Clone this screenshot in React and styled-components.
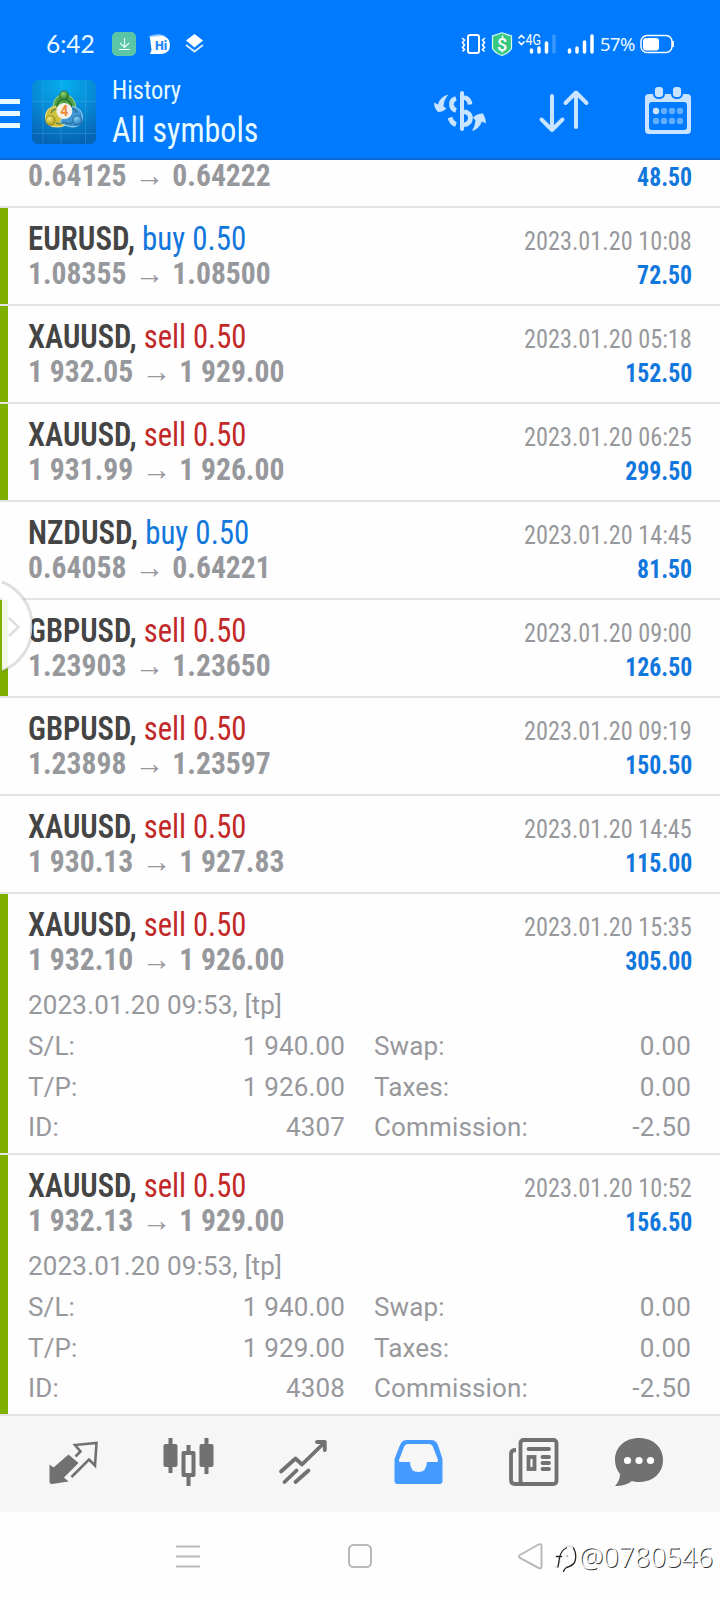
import React from "react";
import styled, { createGlobalStyle } from "styled-components";

const Global = createGlobalStyle`
  * { box-sizing: border-box; }
  body { margin: 0; background: #fff; font-family: Roboto, "Noto Sans CJK SC", sans-serif; }
`;

const Screen = styled.div`
  position: relative;
  width: 720px;
  height: 1600px;
  display: flex;
  flex-direction: column;
  overflow: hidden;
  background: #fefefe;
`;

const Header = styled.header`
  flex: none;
  height: 160px;
  background: #007aff;
  border-bottom: 2px solid #0a68d6;
  display: flex;
  flex-direction: column;
`;

const StatusBar = styled.div`
  height: 70px;
  padding: 18px 45px 0 46px;
  display: flex;
  align-items: center;
  color: #e9f8ff;
`;

const Clock = styled.span`
  width: 64px;
  font: 400 24.5px/30px Lato, sans-serif;
`;

const StatusIcons = styled.svg`
  display: block;
  margin-left: ${(p) => p.$gap || 0}px;
`;

const Spacer = styled.i`
  flex: 1;
`;

const Percent = styled.span`
  margin-left: 6px;
  width: 33px;
  white-space: nowrap;
  font: 400 18.5px/24px "Noto Sans", sans-serif;
  letter-spacing: -0.6px;
`;

const TitleBar = styled.div`
  height: 88px;
  display: flex;
  align-items: flex-start;
`;

const MenuButton = styled.div`
  width: 20px;
  margin: 29px 12px 0 0;
  display: flex;
  flex-direction: column;
  gap: 7px;
`;

const MenuLine = styled.i`
  height: 5px;
  background: #e6fbff;
`;

const LogoSvg = styled.svg`
  margin-top: 10px;
`;

const Titles = styled.div`
  flex: 1;
  padding-left: 16px;
  color: #e6fbff;
  font-family: Roboto, sans-serif;
  font-stretch: 75%;
`;

const Caption = styled.div`
  margin-top: 5px;
  font-size: 26px;
  line-height: 30px;
  font-weight: 450;
  transform: scaleX(0.94);
  transform-origin: left;
`;

const Heading = styled.div`
  margin-top: 6px;
  font-size: 34.5px;
  line-height: 38px;
  font-weight: 450;
  transform: scaleX(0.928);
  transform-origin: left;
`;

const List = styled.main`
  height: 1256px;
  overflow: hidden;
  display: flex;
  flex-direction: column;
  justify-content: flex-end;
`;

const Deal = styled.article`
  flex: none;
  height: ${(p) => (p.$open ? 261 : 98)}px;
  border-bottom: 2px solid #e4e4e4;
  display: flex;
`;

const Stripe = styled.i`
  width: 8px;
  background: ${(p) => (p.$on ? "#7fb000" : "transparent")};
`;

const DealBody = styled.div`
  flex: 1;
  padding: 14px 28px 0 20px;
`;

const Line = styled.div`
  display: flex;
  justify-content: space-between;
  align-items: baseline;
  height: 34px;
  line-height: 34px;
  white-space: pre;
  font-stretch: 75%;
`;

const Title = styled.span`
  font-size: 32.5px;
  transform: scaleX(${(p) => (p.$side === "buy" ? 0.952 : 0.94)});
  transform-origin: left;
`;

const Symbol = styled.span`
  font-weight: 620;
  color: #444;
`;

const Side = styled.span`
  font-weight: 400;
  color: ${(p) => (p.$side === "buy" ? "#1277dc" : "#c22828")};
`;

const Prices = styled.span`
  font-size: 32px;
  font-weight: 680;
  color: #97989c;
  transform: scaleX(0.925);
  transform-origin: left;
`;

const Arrow = styled.span`
  font-family: "Liberation Sans", sans-serif;
  font-weight: 400;
  font-size: 32px;
  line-height: 20px;
  margin: 0 1.5px;
`;

const When = styled.span`
  font-size: 26px;
  color: #97989c;
  transform: scaleX(0.933);
  transform-origin: right;
`;

const Profit = styled.span`
  font-size: 26px;
  font-weight: 700;
  color: #1277dc;
  transform: scaleX(0.915);
  transform-origin: right;
`;

const Comment = styled.div`
  margin-top: 10px;
  height: 41px;
  font-size: 26px;
  line-height: 38px;
  letter-spacing: 0.17px;
  color: #97989c;
`;

const Details = styled.dl`
  margin: 0;
  display: grid;
  grid-template-columns: 317px 317px;
  column-gap: 29px;
  grid-auto-rows: 40.6px;
`;

const Detail = styled.div`
  display: flex;
  justify-content: space-between;
  font-size: 26px;
  line-height: 38px;
  letter-spacing: 0.15px;
  color: #97989c;
`;

const TabBar = styled.nav`
  height: 96px;
  background: #f6f6f6;
  display: flex;
`;

const SystemBar = styled.footer`
  height: 88px;
  display: flex;
  align-items: center;
`;

const EdgeHandle = styled.svg`
  position: absolute;
  left: 0;
  top: 576px;
`;

const Watermark = styled.div`
  position: absolute;
  right: 7px;
  bottom: 27px;
  display: flex;
  align-items: center;
  color: #fff;
  font: 300 27.5px/32px "Noto Sans", sans-serif;
  text-shadow: 1px 1px 0.5px #333;
  white-space: nowrap;
`;

const deals = [
  ["AUDUSD", "buy", "0.64125", "0.64222", "", "48.50", 0],
  ["EURUSD", "buy", "1.08355", "1.08500", "2023.01.20 10:08", "72.50", 1],
  ["XAUUSD", "sell", "1 932.05", "1 929.00", "2023.01.20 05:18", "152.50", 1],
  ["XAUUSD", "sell", "1 931.99", "1 926.00", "2023.01.20 06:25", "299.50", 1],
  ["NZDUSD", "buy", "0.64058", "0.64221", "2023.01.20 14:45", "81.50", 0],
  ["GBPUSD", "sell", "1.23903", "1.23650", "2023.01.20 09:00", "126.50", 1],
  ["GBPUSD", "sell", "1.23898", "1.23597", "2023.01.20 09:19", "150.50", 0],
  ["XAUUSD", "sell", "1 930.13", "1 927.83", "2023.01.20 14:45", "115.00", 0],
  ["XAUUSD", "sell", "1 932.10", "1 926.00", "2023.01.20 15:35", "305.00", 1,
    { sl: "1 940.00", tp: "1 926.00", id: "4307" }],
  ["XAUUSD", "sell", "1 932.13", "1 929.00", "2023.01.20 10:52", "156.50", 1,
    { sl: "1 940.00", tp: "1 929.00", id: "4308" }],
];

function DealRow({ deal, headless }) {
  const [symbol, side, open, close, when, profit, marked, more] = deal;
  const details = more && [
    ["S/L:", more.sl], ["Swap:", "0.00"],
    ["T/P:", more.tp], ["Taxes:", "0.00"],
    ["ID:", more.id], ["Commission:", "-2.50"],
  ];
  return (
    <Deal $open={!!more}>
      <Stripe $on={marked} />
      <DealBody>
        <Line>
          {!headless && (
            <>
              <Title $side={side}><Symbol>{symbol}, </Symbol><Side $side={side}>{side} 0.50</Side></Title>
              <When>{when}</When>
            </>
          )}
        </Line>
        <Line>
          <Prices>{open} <Arrow>→</Arrow> {close}</Prices>
          <Profit>{profit}</Profit>
        </Line>
        {more && (
          <>
            <Comment>2023.01.20 09:53, [tp]</Comment>
            <Details>
              {details.map(([k, v]) => (
                <Detail key={k}><span>{k}</span><span>{v}</span></Detail>
              ))}
            </Details>
          </>
        )}
      </DealBody>
    </Deal>
  );
}

const AppLogo = () => (
  <LogoSvg width="64" height="64" viewBox="0 0 64 64">
    <defs>
      <radialGradient id="bg" cx="50%" cy="5%" r="95%">
        <stop offset="0" stopColor="#06b0ee" /><stop offset=".55" stopColor="#0788d4" /><stop offset="1" stopColor="#0664b4" />
      </radialGradient>
      <radialGradient id="gr" cx="40%" cy="30%" r="70%"><stop offset="0" stopColor="#8fd673" /><stop offset="1" stopColor="#257a2b" /></radialGradient>
      <radialGradient id="ye" cx="40%" cy="30%" r="70%"><stop offset="0" stopColor="#f4ea78" /><stop offset="1" stopColor="#a99a1c" /></radialGradient>
      <radialGradient id="bl" cx="40%" cy="30%" r="70%"><stop offset="0" stopColor="#7fd0f4" /><stop offset="1" stopColor="#1f72bb" /></radialGradient>
    </defs>
    <rect width="64" height="64" rx="6" fill="url(#bg)" />
    <path d="M11 0V64M29 0V64M53.500 0V64M0 21.500H64M0 53.500H64" stroke="#4bbcf0" strokeOpacity=".3" strokeWidth="1" />
    <path d="M21 29Q21 15 32 14.500Q43 15 44 29z" fill="#4ea247" stroke="#a4d489" strokeWidth="1" />
    <path d="M25 26Q13 27 13.500 38Q14 47 25 47Q33 47 36 42z" fill="#cfc13c" stroke="#efe58e" strokeWidth="1" />
    <path d="M39 26Q51 28 50.500 38Q50 47 40 47Q32 46 28 42z" fill="#3e96d6" stroke="#9ad2f2" strokeWidth="1" />
    <path d="M25 27q0-7 7-8q7 1 7.500 8" fill="none" stroke="#2a7330" strokeWidth="1.500" />
    <path d="M19 33q2-4 6-4M45 33q-2-4-5-4M24 43q5 2 8-1M40 43q-5 2-7-1" fill="none" stroke="#245f6c" strokeOpacity=".6" strokeWidth="1.500" />
    <circle cx="32" cy="15.500" r="4.500" fill="url(#gr)" stroke="#1f5c2b" strokeWidth=".6" />
    <circle cx="18.300" cy="40.500" r="4.800" fill="url(#ye)" stroke="#6f6a1a" strokeWidth=".6" />
    <circle cx="45.300" cy="40.500" r="4.800" fill="url(#bl)" stroke="#174f85" strokeWidth=".6" />
    <circle cx="32.300" cy="31" r="8" fill="#f3f0e6" />
    <text x="32.300" y="36" textAnchor="middle" fontFamily="Roboto" fontWeight="700" fontSize="14" fill="#ee8a35">4</text>
  </LogoSvg>
);

const Tools = () => (
  <svg width="300" height="88" viewBox="420 70 300 88">
    <g fill="none" stroke="#c8e4ff" strokeWidth="4">
      <path d="M462 93V129" strokeLinecap="round" />
      <path d="M456 98.500Q451 100 451.500 105Q452 109 456 110.500M456 124.500Q451.500 123 450 117.500M464 97.500Q469.500 98.500 470 104.500M464 111.500Q470.500 113 470.500 118Q470 124 464 125" strokeWidth="4.800" />
      <path d="M552 96V130M541.500 119.500L552 130L562.500 119.500M576 127V93M565.500 103L576 92.500L586.500 103" strokeLinecap="round" strokeLinejoin="round" />
    </g>
    <path d="M448.500 94.500Q439.500 97 438 104.500L434 102.500Q434 108 438 112Q443 112 446.500 108.500L443.500 106.500Q443.500 100 448.500 94.500z" fill="#c8e4ff" />
    <path d="M472 131Q475 126 475.500 120.500L473 117.500Q477 113.500 483 113.500Q486 118 486 123.500L482 121.500Q479 129 472 131z" fill="#c8e4ff" />
    <path d="M649 94H687a4 4 0 0 1 4 4V130a4 4 0 0 1-4 4H649a4 4 0 0 1-4-4V98a4 4 0 0 1 4-4zM652 102a3 3 0 0 0-3 3V127a3 3 0 0 0 3 3H684a3 3 0 0 0 3-3V105a3 3 0 0 0-3-3z" fill="#c8e4ff" fillRule="evenodd" />
    {[659, 677].map((x) => (
      <rect key={x} x={x - 5} y="86" width="10" height="12" rx="4" fill="#c8e4ff" stroke="#007aff" strokeWidth="2" />
    ))}
    {[656, 664, 672, 680].map((x, i) => (
      <g key={x} fill="#63aeff">
        <circle cx={x} cy="111" r="3.200" fill={i ? "#63aeff" : "#c8e4ff"} />
        <circle cx={x} cy="121" r="3.200" />
      </g>
    ))}
  </svg>
);

const LeftStatus = () => (
  <StatusIcons width="100" height="28" viewBox="110 30 100 28">
    <rect x="112" y="32" width="24" height="24" rx="5" fill="#5cc5a5" />
    <path d="M124.500 38V47M120 43l4.500 4.500l4.500-4.500M119 49.500H130" stroke="#e5fff6" strokeWidth="1.200" fill="none" />
    <path d="M149 36q12-4 17 1v6h-14z" fill="#fff" opacity=".6" />
    <path d="M150 37L162 36q8 1 8 9q0 8-8 9H150l1.500-4z" fill="#fff" />
    <text x="155" y="50" fontFamily="Roboto" fontWeight="900" fontSize="12.500" fill="#2a8af6">Hi</text>
    <path d="M194.500 34L203 40.500L194.500 47.500L186 40.500z" fill="#fff" />
    <path d="M186 45l8.500 6.500l8.500-6.500" stroke="#d5eaff" strokeWidth="2" fill="none" />
  </StatusIcons>
);

const RightStatus = () => (
  <StatusIcons width="134" height="28" viewBox="460 30 134 28">
    <rect x="468" y="35" width="11" height="18" rx="2" fill="none" stroke="#fff" strokeWidth="2" />
    <path d="M462 38l2.500 2l-2 2.500l2 2.500l-2 2.500l2 2l-2 2M485 38l-2.500 2l2 2.500l-2 2.500l2 2.500l-2 2l2 2" stroke="#fff" strokeWidth="1.600" fill="none" />
    <path d="M502 32.800L511.500 36V48.500Q509 53 502 55.500Q495 53 492.500 48.500V36z" fill="#38c881" stroke="#d6fff0" strokeWidth="1.200" />
    <text x="502" y="50.500" textAnchor="middle" fontFamily="Roboto" fontWeight="500" fontSize="18" fill="#fff">$</text>
    <path d="M518.500 38.500l3-3l3 3M518.500 41.500l3 3l3-3" stroke="#fff" strokeWidth="1.600" fill="none" />
    <text x="525.500" y="45" fontFamily="Roboto" fontSize="14" fontWeight="400" fill="#fff" textLength="15.500" lengthAdjust="spacingAndGlyphs">4G</text>
    <g stroke="#fff" strokeWidth="3.500" strokeLinecap="round">
      <path d="M531.500 50V52M539 48V52M546.500 43V52M569.500 50V52M577 48V52M584.500 42V52M592 36V52" />
      <path d="M554 36V52" stroke="#3b98ff" />
    </g>
  </StatusIcons>
);

const Battery = () => (
  <StatusIcons $gap={6} width="36" height="22" viewBox="639 33 36 22">
    <rect x="641" y="35.500" width="31" height="17" rx="6" fill="none" stroke="#fff" strokeWidth="1.500" />
    <rect x="643" y="38" width="16" height="12.500" rx="3" fill="#fff" />
    <path d="M673 41v6" stroke="#fff" strokeWidth="1.800" />
  </StatusIcons>
);

const TabIcons = () => (
  <svg width="720" height="96" viewBox="0 1416 720 96">
    <g fill="#717171">
      <path d="M49.500 1464.500L53.500 1467.500L68.500 1454.500L78.500 1463L64 1477.500L68.500 1481.500L52 1484Q49.500 1484 49.500 1482z" />
      <path d="M75.500 1456.500L80.500 1451.500L75 1445L96.500 1443L95 1465.500L89 1459.500L71.500 1477" fill="none" stroke="#717171" strokeWidth="2.600" />
      <path d="M168.500 1438h4v6h3a2 2 0 0 1 2 2v19a2 2 0 0 1-2 2h-3v6h-4v-6h-3a2 2 0 0 1-2-2v-19a2 2 0 0 1 2-2h3z" />
      <path d="M204.500 1438h4v6h3a2 2 0 0 1 2 2v19a2 2 0 0 1-2 2h-3v7h-4v-7h-3a2 2 0 0 1-2-2v-19a2 2 0 0 1 2-2h3z" />
      <path d="M186.500 1445h4v6h3a2 2 0 0 1 2 2v22a2 2 0 0 1-2 2h-3v9h-4v-9h-3a2 2 0 0 1-2-2v-22a2 2 0 0 1 2-2h3zM185.500 1455v18h6v-18z" fillRule="evenodd" />
    </g>
    <g fill="none" stroke="#717171" strokeWidth="3.800">
      <path d="M281 1471.500L295.500 1458.500L302 1464.500L324.500 1442.500M317 1442H324.800V1450M284.500 1482L296.500 1470.500M295.500 1482L308.500 1470.500" strokeLinecap="round" strokeLinejoin="round" />
      <rect x="520.500" y="1440" width="36" height="44" rx="3" />
      <path d="M516 1450q-5 0-5 4v26q0 4 4 4H524" />
      <path d="M528.500 1449H549M542.500 1457H549M542.500 1463H549M542.500 1469H549" strokeLinecap="round" />
      <rect x="528.500" y="1457" width="6" height="12" />
    </g>
    <path d="M407 1440H431q5 0 7 5l4.500 14V1481a3 3 0 0 1-3 3H397.500a3 3 0 0 1-3-3V1459L400 1445q2-5 7-5zM408 1444q-3 0-4 3l-5 13q-.5 2 1.500 2H410q0 10 8.500 10q8 0 8.500-10h9.500q2 0 1.500-2l-5-13q-1-3-4-3z" fill="#459bff" fillRule="evenodd" />
    <path d="M639 1438c14 0 24 9 24 22s-10 22-24 22c-3 0-5-.3-7-1c-5 4-11 5-17 5c3-3 5-7 5-12c-3-4-5-8-5-14c0-13 10-22 24-22z" fill="#717171" />
    {[627.5, 639, 650.5].map((x) => <circle key={x} cx={x} cy="1460.500" r="3.600" fill="#fff" />)}
  </svg>
);

const SystemIcons = () => (
  <svg width="720" height="88" viewBox="0 1512 720 88" fill="none" stroke="#b9b9b9" strokeWidth="2">
    <path d="M176 1546.500H200M176 1556.500H200M176 1566.500H200" />
    <rect x="349" y="1545" width="22" height="22" rx="4.500" />
    <path d="M538.500 1544.500L520 1555Q518 1556.500 520 1558L538.500 1568Q541.500 1569 541.500 1566.500V1546Q541.500 1543.500 538.500 1544.500z" />
  </svg>
);

const WatermarkLogo = () => (
  <svg width="26" height="30" viewBox="554 1542 26 30" fill="none" strokeLinecap="round">
    <g stroke="#ddd" strokeWidth="1.500">
      <path d="M556 1567Q560 1567 561 1560M566 1547Q571 1544.500 575 1548" />
    </g>
    <g stroke="#222" strokeWidth="1.300">
      <path d="M559 1567L560.500 1558Q562 1550 567.500 1548M557.500 1556.500H562.500" />
      <path d="M574.500 1548Q578.500 1555 575.500 1562.500Q573 1566 567.500 1567.500Q565 1569 564.500 1571.500" />
      <path d="M568 1556H568.500" stroke="#888" />
    </g>
  </svg>
);

export default function App() {
  return (
    <Screen>
      <Global />
      <Header>
        <StatusBar>
          <Clock>6:42</Clock>
          <LeftStatus />
          <Spacer />
          <RightStatus />
          <Percent>57%</Percent>
          <Battery />
        </StatusBar>
        <TitleBar>
          <MenuButton><MenuLine /><MenuLine /><MenuLine /></MenuButton>
          <AppLogo />
          <Titles>
            <Caption>History</Caption>
            <Heading>All symbols</Heading>
          </Titles>
          <Tools />
        </TitleBar>
      </Header>
      <List>
        {deals.map((d, i) => <DealRow key={i} deal={d} headless={i === 0} />)}
      </List>
      <TabBar><TabIcons /></TabBar>
      <SystemBar><SystemIcons /></SystemBar>
      <EdgeHandle width="36" height="104" viewBox="0 576 36 104">
        <path d="M2 582A47.800 47.800 0 0 1 2 671z" fill="#fff" fillOpacity=".9" />
        <path d="M2 582A47.800 47.800 0 0 1 2 671" fill="none" stroke="#000" strokeOpacity=".12" strokeWidth="3" />
        <path d="M9 618L18.500 627L9 636" fill="none" stroke="#dedede" strokeWidth="2.500" />
      </EdgeHandle>
      <Watermark><WatermarkLogo />@0780546</Watermark>
    </Screen>
  );
}
